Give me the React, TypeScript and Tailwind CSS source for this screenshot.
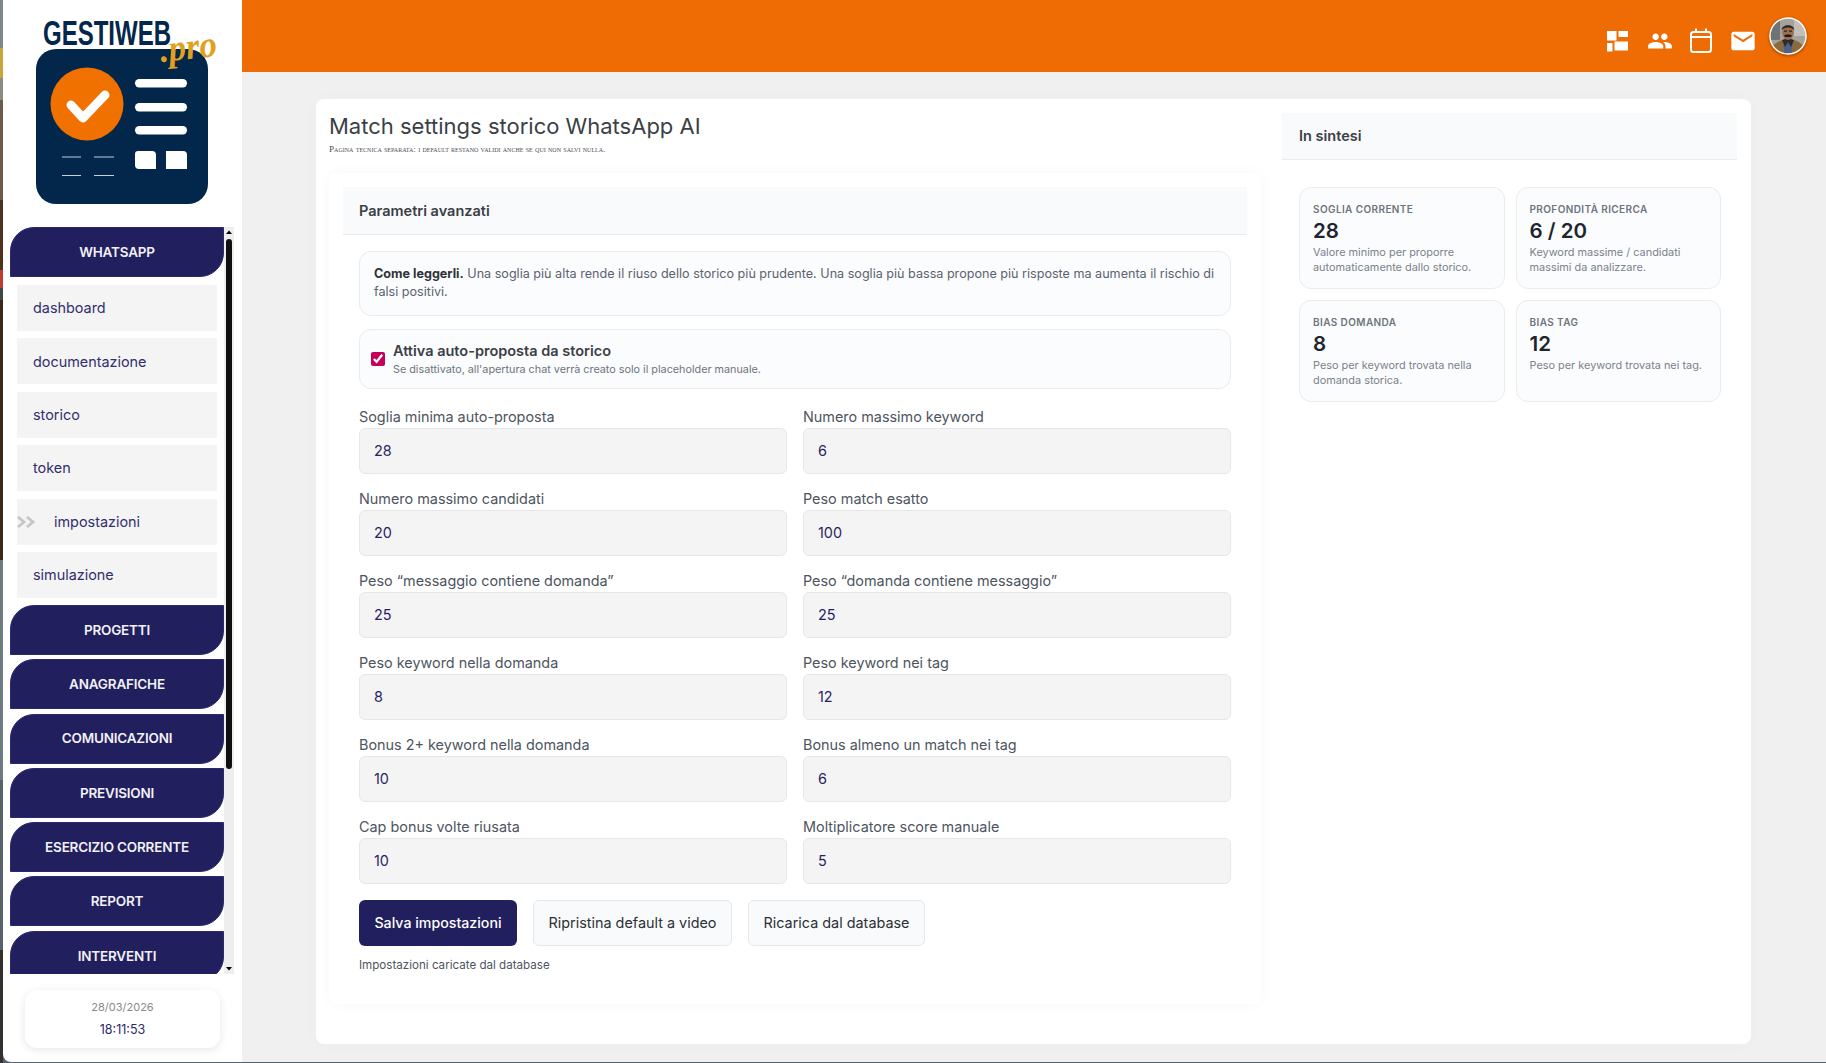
import React from "react";
import { MdPeople, MdEmail } from "react-icons/md";

const subItems = ["dashboard", "documentazione", "storico", "token", "impostazioni", "simulazione"];
const laterItems = ["PROGETTI", "ANAGRAFICHE", "COMUNICAZIONI", "PREVISIONI", "ESERCIZIO CORRENTE", "REPORT", "INTERVENTI"];

const fields: [string, string][] = [
  ["Soglia minima auto-proposta", "28"],
  ["Numero massimo keyword", "6"],
  ["Numero massimo candidati", "20"],
  ["Peso match esatto", "100"],
  ["Peso \u201Cmessaggio contiene domanda\u201D", "25"],
  ["Peso \u201Cdomanda contiene messaggio\u201D", "25"],
  ["Peso keyword nella domanda", "8"],
  ["Peso keyword nei tag", "12"],
  ["Bonus 2+ keyword nella domanda", "10"],
  ["Bonus almeno un match nei tag", "6"],
  ["Cap bonus volte riusata", "10"],
  ["Moltiplicatore score manuale", "5"],
];

const stats = [
  ["SOGLIA CORRENTE", "28", "Valore minimo per proporre automaticamente dallo storico."],
  ["PROFONDITÀ RICERCA", "6 / 20", "Keyword massime / candidati massimi da analizzare."],
  ["BIAS DOMANDA", "8", "Peso per keyword trovata nella domanda storica."],
  ["BIAS TAG", "12", "Peso per keyword trovata nei tag."],
];

const wallpaper = [
  "h-[48px] bg-[#80878a]",
  "h-[30px] bg-[#c9a53c]",
  "h-[22px] bg-[#8d8c82]",
  "h-[100px] bg-[#6d5a48]",
  "h-[70px] bg-[#4f3320]",
  "h-[18px] bg-[#c23b30]",
  "h-[12px] bg-[#3d4a44]",
  "h-[260px] bg-[#3c2718]",
  "h-[220px] bg-[#6c7a82]",
  "h-[170px] bg-[#57636a]",
  "h-[113px] bg-[#33312e]",
];

function Logo() {
  return (
    <svg width="239" height="227" viewBox="3 0 239 227" className="block">
      <text x="43" y="45" fontFamily="Liberation Sans, sans-serif" fontWeight="700" fontSize="35" fill="#03274b" textLength="128" lengthAdjust="spacingAndGlyphs">GESTIWEB</text>
      <rect x="36" y="49" width="172" height="155" rx="20" fill="#03274b" />
      <circle cx="87" cy="104" r="36.5" fill="#f07000" />
      <path d="M71 105 L83 118 L105 95" fill="none" stroke="#fff" strokeWidth="9" strokeLinecap="round" strokeLinejoin="round" />
      <rect x="135" y="79" width="52" height="8.5" rx="4.2" fill="#fff" />
      <rect x="135" y="103" width="52" height="8.5" rx="4.2" fill="#fff" />
      <rect x="135" y="126" width="52" height="8.5" rx="4.2" fill="#fff" />
      <path d="M135 154 a3 3 0 0 1 3-3 H152 a4 4 0 0 1 4 4 V169 H139 a4 4 0 0 1-4-4 Z" fill="#fff" />
      <path d="M166 151 H183 a4 4 0 0 1 4 4 V169 H166 Z" fill="#fff" />
      <path d="M62 157 H81 M94 157 H114 M62 175.500 H81 M94 175.500 H114" stroke="#c8ced3" strokeWidth="1" />
      <text x="161" y="62" fontFamily="Liberation Serif, serif" fontStyle="italic" fontWeight="700" fontSize="37" fill="#e0a11e" textLength="57" lengthAdjust="spacingAndGlyphs" transform="rotate(-6 161 62)">.pro</text>
    </svg>
  );
}

function Avatar() {
  return (
    <svg width="38" height="38" viewBox="0 0 38 38" className="rounded-full shadow-[0_1px_3px_rgba(0,0,0,0.35)]">
      <defs>
        <clipPath id="av"><circle cx="19" cy="19" r="18" /></clipPath>
      </defs>
      <g clipPath="url(#av)">
        <rect width="38" height="38" fill="#a5a19b" />
        <rect x="25" y="3" width="13" height="16" fill="#c2bfba" />
        <rect x="0" y="3" width="11" height="20" fill="#6f7276" />
        <path d="M1 38 C2 27 8 24.500 14 23 L24 23 C30 24.500 36 27 37 38 Z" fill="#8a6a3c" />
        <path d="M14 24 L24 24 L22 38 L16 38 Z" fill="#4a628c" />
        <path d="M13 23 L16 30 L19 25 L22 30 L25 23 L22 22 L16 22 Z" fill="#2e2a28" />
        <ellipse cx="19" cy="15.500" rx="5.800" ry="7.500" fill="#9b6e52" />
        <path d="M12.800 13 C12 6.500 26 6.500 25.200 13 C23 9.500 15 9.500 12.800 13 Z" fill="#2f2823" />
        <path d="M15 18.500 C17 17.300 21 17.300 23 18.500 L22 20 L16 20 Z" fill="#241a15" />
        <rect x="15" y="13.500" width="3" height="1.200" fill="#2b1f18" />
        <rect x="20" y="13.500" width="3" height="1.200" fill="#2b1f18" />
      </g>
      <circle cx="19" cy="19" r="18.100" fill="none" stroke="#fff" strokeWidth="1.500" />
    </svg>
  );
}

function NavButton({ label }: { label: string }) {
  return (
    <div className="flex h-[50px] shrink-0 items-center justify-center rounded-tl-[24px] rounded-br-[24px] border border-[#2a2a72] bg-[#221f5e] text-[13.500px] font-semibold tracking-[-0.2px] text-[#f1f1f6]">
      {label}
    </div>
  );
}

export default function App() {
  return (
    <div className="flex h-[1063px] w-[1826px] overflow-hidden bg-[#59646a] font-['Inter',sans-serif]">
      <div className="flex w-[3px] shrink-0 flex-col">
        {wallpaper.map((c) => (
          <div key={c} className={c} />
        ))}
      </div>

      <aside className="flex h-[1062px] w-[239px] shrink-0 flex-col rounded-bl-[8px] bg-white">
        <Logo />
        <div className="ml-[7px] flex h-[747px] w-[224px] shrink-0">
          <div className="w-[214px] overflow-hidden">
            <NavButton label="WHATSAPP" />
            <div className="mt-[8px] mb-[7px] flex flex-col gap-[7.400px] px-[7px]">
              {subItems.map((s) => (
                <div key={s} className="flex h-[46px] items-center bg-[#f4f4f4] text-[14.400px] text-[#322f6e]">
                  {s === "impostazioni" ? (
                    <>
                      <svg width="19" height="12" viewBox="0 0 19 12" className="shrink-0">
                        <path d="M1 1 L7 6 L1 11 M10 1 L16 6 L10 11" fill="none" stroke="#c6c6c6" strokeWidth="2.800" />
                      </svg>
                      <span className="ml-[18px]">{s}</span>
                    </>
                  ) : (
                    <span className="ml-[16px]">{s}</span>
                  )}
                </div>
              ))}
            </div>
            <div className="flex flex-col gap-[4.300px]">
              {laterItems.map((l) => (
                <NavButton key={l} label={l} />
              ))}
            </div>
          </div>
          <div className="flex w-[10px] flex-col items-center bg-[#eeeeee]">
            <svg width="8" height="12" viewBox="0 0 8 12" className="shrink-0">
              <path d="M1 7 L4 3.500 L7 7 Z" fill="#000" />
            </svg>
            <div className="h-[530px] w-[6px] shrink-0 rounded-full bg-[#101010]" />
            <div className="flex-1" />
            <svg width="8" height="12" viewBox="0 0 8 12" className="shrink-0">
              <path d="M1 5 L7 5 L4 8.500 Z" fill="#000" />
            </svg>
          </div>
        </div>
        <div className="mt-[16px] ml-[22px] flex h-[58px] w-[195px] flex-col items-center justify-center rounded-[12px] bg-white pb-[2px] shadow-[0_2px_8px_rgba(0,0,0,0.10)]">
          <div className="text-[11px] leading-[16px] text-[#8a8a8a]">28/03/2026</div>
          <div className="mt-[7px] text-[12.500px] leading-[16px] text-[#2b2866]">18:11:53</div>
        </div>
      </aside>

      <div className="flex h-[1062px] flex-1 flex-col bg-[#f0f0f1]">
        <header className="flex h-[72px] shrink-0 items-center justify-end bg-[#ef6c05] pr-[19px] text-white">
          <svg width="21" height="21" viewBox="0 0 21 21" className="mt-[11px] mr-[19px]" fill="#fff">
            <rect x="0" y="0" width="9.500" height="9.500" />
            <rect x="11.500" y="0" width="9.500" height="6" />
            <rect x="0" y="12" width="5.500" height="8.500" />
            <rect x="7.500" y="10.500" width="13.500" height="9" />
          </svg>
          <MdPeople size={26} className="mt-[9px] mr-[16px]" />
          <svg width="24" height="26" viewBox="0 0 24 26" className="mt-[9px] mr-[16px]" fill="none" stroke="#fff" strokeWidth="2">
            <rect x="2" y="4" width="20" height="20" rx="2.500" />
            <path d="M2 9 H22" />
            <path d="M7 0.500 V5 M17 0.500 V5" />
          </svg>
          <MdEmail size={28} className="mt-[9px] mr-[12px]" />
          <div className="mb-[1px]">
            <Avatar />
          </div>
        </header>

        <div className="pt-[27px] pl-[74px]">
          <main className="flex h-[945px] w-[1435px] rounded-[8px] bg-white pl-[13px] shadow-[0_0_20px_rgba(0,0,0,0.02)]">
            <section className="w-[932px] shrink-0">
              <h1 className="mt-[14px] text-[22px] leading-[26px] font-normal text-[#3b3f46]">
                Match settings storico WhatsApp AI
              </h1>
              <p className="mt-[4px] font-['Liberation_Serif',serif] text-[9.200px] leading-[12px] text-[#4a4f57] [font-variant-caps:small-caps]">
                Pagina tecnica separata: i default restano validi anche se qui non salvi nulla.
              </p>
              <div className="mt-[18px] h-[831px] rounded-[8px] bg-white px-[14px] pt-[14px] shadow-[0_0_14px_rgba(0,0,0,0.035)]">
                <div className="flex h-[48px] items-center border-b border-[#e9ecef] bg-[#f9fafb] pl-[16px] text-[14.500px] font-semibold text-[#3b3f46]">
                  Parametri avanzati
                </div>
                <div className="px-[16px] pt-[16px]">
                  <div className="h-[65px] rounded-[12px] border border-[#e9ecef] bg-[#fbfcfd] px-[14px] pt-[13px] text-[12.600px] leading-[18px] text-[#5a6270]">
                    <strong className="font-bold text-[#2f3339]">Come leggerli.</strong> Una soglia più alta rende il riuso dello storico più prudente. Una soglia più bassa propone più risposte ma aumenta il rischio di falsi positivi.
                  </div>
                  <div className="mt-[13px] flex h-[60px] items-center rounded-[12px] border border-[#e9ecef] bg-[#fbfcfd] pl-[11px]">
                    <input type="checkbox" defaultChecked readOnly className="m-0 h-[14px] w-[14px] accent-[#c2005a]" />
                    <div className="ml-[8px]">
                      <div className="text-[14.500px] leading-[18px] font-semibold text-[#3b3f46]">Attiva auto-proposta da storico</div>
                      <div className="mt-[2px] text-[10.800px] leading-[15px] text-[#6c757d]">
                        Se disattivato, all'apertura chat verrà creato solo il placeholder manuale.
                      </div>
                    </div>
                  </div>
                  <div className="mt-[17px] grid grid-cols-2 gap-x-[16px] gap-y-[14px]">
                    {fields.map(([label, value]) => (
                      <label key={label} className="block">
                        <span className="block h-[22px] text-[14.400px] leading-[22px] text-[#4d5560]">{label}</span>
                        <input
                          readOnly
                          defaultValue={value}
                          className="block h-[46px] w-full rounded-[6px] border border-[#e5e7eb] bg-[#f4f4f5] px-[14px] pb-[2px] text-[14.400px] text-[#2a1f5f] outline-none"
                        />
                      </label>
                    ))}
                  </div>
                  <div className="mt-[16px] flex gap-[16px]">
                    <button className="h-[46px] w-[158px] rounded-[6px] bg-[#221f5e] text-[14.200px] font-medium text-white">Salva impostazioni</button>
                    <button className="h-[46px] w-[199px] rounded-[6px] border border-[#e5e7eb] bg-[#f9fafb] text-[14.400px] text-[#2d3038]">Ripristina default a video</button>
                    <button className="h-[46px] w-[177px] rounded-[6px] border border-[#e5e7eb] bg-[#f9fafb] text-[14.400px] text-[#2d3038]">Ricarica dal database</button>
                  </div>
                  <p className="mt-[11px] text-[11.600px] leading-[16px] text-[#4d5560]">Impostazioni caricate dal database</p>
                </div>
              </div>
            </section>

            <section className="ml-[21px] w-[455px] shrink-0 pt-[14px]">
              <div className="flex h-[47px] items-center border-b border-[#e9ecef] bg-[#f9fafb] pl-[17px] text-[14.500px] font-semibold text-[#3b3f46]">
                In sintesi
              </div>
              <div className="mt-[27px] ml-[17px] grid w-[422px] grid-cols-[205.500px_205.500px] gap-x-[11px] gap-y-[11px]">
                {stats.map(([title, value, desc]) => (
                  <div key={title} className="h-[102px] rounded-[12px] border border-[#e9ecef] bg-[#fbfcfd] pt-[14px] pl-[13px] pr-[12px]">
                    <div className="text-[10px] leading-[14px] font-semibold tracking-[0.4px] text-[#6c757d]">{title}</div>
                    <div className="mt-[3px] text-[20.500px] leading-[24px] font-semibold text-[#1f2530]">{value}</div>
                    <div className="mt-[2px] text-[10.900px] leading-[15px] text-[#7a828c]">{desc}</div>
                  </div>
                ))}
              </div>
            </section>
          </main>
        </div>
      </div>
    </div>
  );
}
